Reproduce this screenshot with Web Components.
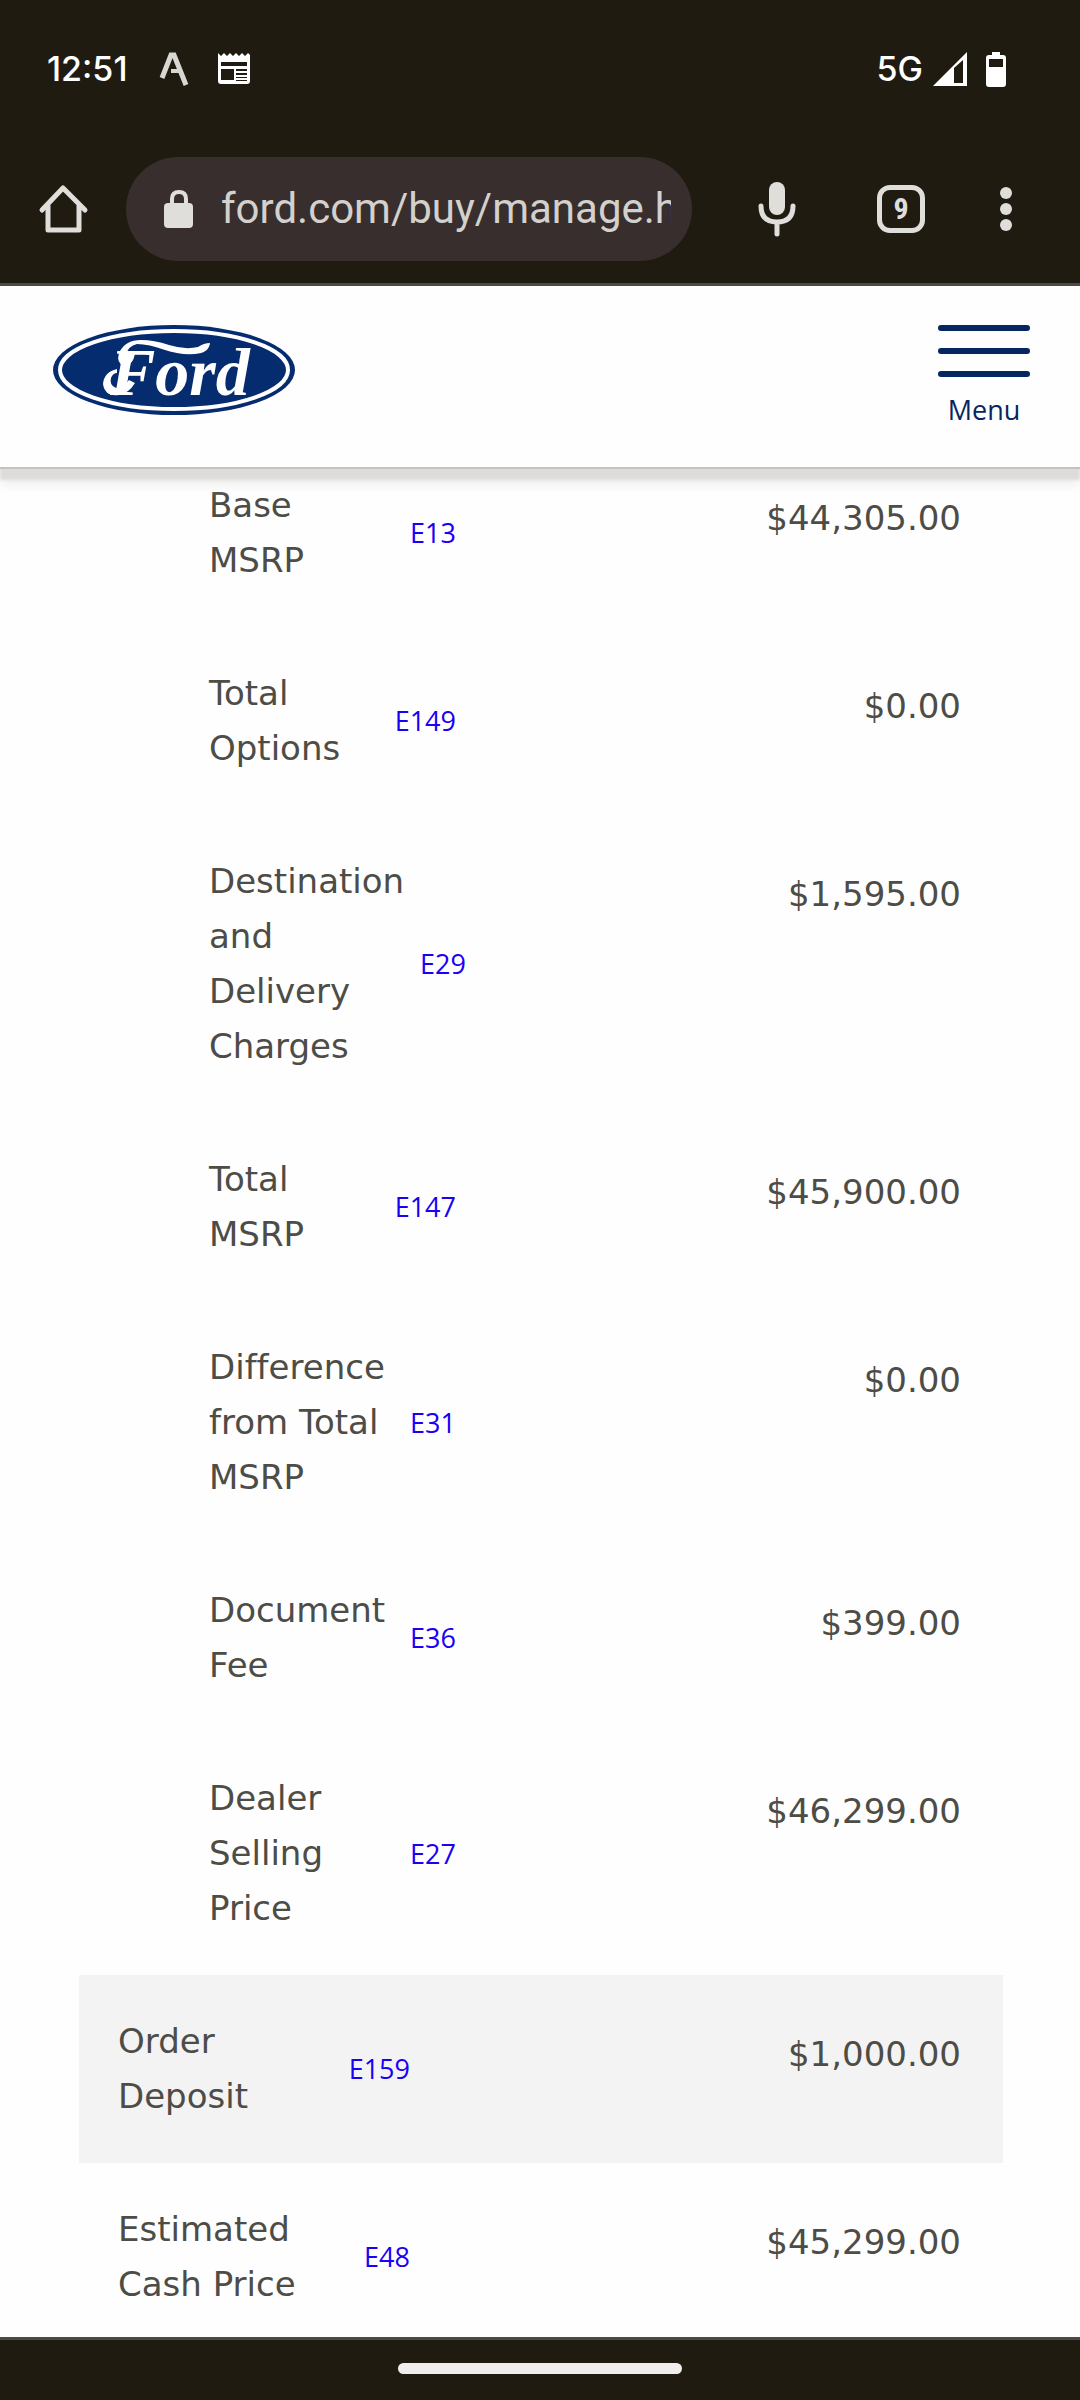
<!DOCTYPE html>
<html lang="en">
<head>
<meta charset="utf-8">
<meta name="viewport" content="width=device-width, initial-scale=1">
<title>Manage your order</title>
<style>
    body {
        margin: 0;
        height: 100vh;
        display: flex;
        flex-direction: column;
        overflow: hidden;
        background: #fefefe;
        color: #4d4c46;
        font-family: "DejaVu Sans", sans-serif;
    }

    main {
        flex: 1;
        min-height: 0;
        overflow: hidden;
    }
</style>
</head>
<body>
<status-bar>12:51<span slot="network">5G</span></status-bar>
<browser-toolbar url="ford.com/buy/manage.h" tabs="9"></browser-toolbar>
<site-header>Menu</site-header>
<main>
    <price-table></price-table>
</main>
<gesture-bar></gesture-bar>

<script>
class StatusBar extends HTMLElement {
    constructor() {
        super();
        this.attachShadow({ mode: 'open' });
    }

    connectedCallback() {
        this.shadowRoot.innerHTML = `
            <style>
                :host {
                    display: flex;
                    justify-content: space-between;
                    align-items: center;
                    height: 138px;
                    padding: 0 74px 0 47px;
                    background: #1f1b11;
                    color: #fff;
                    font: 500 34px/40px Inter, sans-serif;
                }
                .side { display: flex; align-items: center; }
                .left { gap: 28px; }
                .right { gap: 10px; }
                .battery { margin-left: 9px; }
                svg { display: block; }
            </style>
            <div class="side left">
                <span><slot></slot></span>
                <svg width="33" height="34" viewBox="0 0 33 34" fill="none" stroke="#d9d7d3" stroke-width="5">
                    <path d="M6 26 L15 3 H18 L30 33"/>
                    <path d="M15 19 H24" stroke-width="4"/>
                </svg>
                <svg width="34" height="32" viewBox="0 0 34 32">
                    <path fill="#fff" fill-rule="evenodd" d="M1 0 L4 3 L7 0 L10 3 L13 0 L16 3 L19 0 L22 3 L25 0 L28 3 L31 0 L33 2 V28 Q33 31 30 31 H4 Q1 31 1 28 Z
                        M4 9 V13 H30 V9 Z M4 16 V27 H17 V16 Z M19 16 V18 H30 V16 Z M19 20 V22 H30 V20 Z M19 24 V25 H30 V24 Z M19 27 V28 H30 V27 Z"/>
                </svg>
            </div>
            <div class="side right">
                <slot name="network"></slot>
                <svg width="34" height="34" viewBox="0 0 34 34">
                    <path fill="#fff" fill-rule="evenodd" d="M0 34 L34 0 V34 Z M21 16 V31 H30 V8 Z"/>
                </svg>
                <svg class="battery" width="20" height="35" viewBox="0 0 20 35">
                    <path fill="#fff" fill-rule="evenodd" d="M6 0 H14 V3 H17 Q20 3 20 6 V32 Q20 35 17 35 H3 Q0 35 0 32 V6 Q0 3 3 3 H6 Z M3 7 V15 H17 V7 Z"/>
                </svg>
            </div>
        `;
    }
}

class BrowserToolbar extends HTMLElement {
    constructor() {
        super();
        this.attachShadow({ mode: 'open' });
    }

    connectedCallback() {
        this.shadowRoot.innerHTML = `
            <style>
                :host {
                    display: flex;
                    align-items: center;
                    padding: 19px 68px 22px 38px;
                    border-bottom: 3px solid #4b4a44;
                    background: #1f1b11;
                    color: #dfdedb;
                }
                button {
                    display: block;
                    margin: 0;
                    padding: 0;
                    border: 0;
                    background: none;
                    color: inherit;
                }
                svg { display: block; }
                .omnibox {
                    flex: 1;
                    min-width: 0;
                    display: flex;
                    align-items: center;
                    gap: 27px;
                    height: 104px;
                    box-sizing: border-box;
                    margin: 0 66px 0 37px;
                    padding: 0 21px 0 38px;
                    border-radius: 52px;
                    background: #382e2d;
                }
                input {
                    flex: 1;
                    min-width: 0;
                    height: 60px;
                    margin: 0;
                    padding: 0;
                    border: 0;
                    outline: 0;
                    background: none;
                    color: #d2d1cd;
                    font: 42px/60px Roboto, sans-serif;
                }
                .actions { display: flex; align-items: center; }
                .tabs {
                    width: 48px;
                    height: 48px;
                    box-sizing: border-box;
                    margin: 0 75px 0 81px;
                    border: 5px solid #dfdedb;
                    border-radius: 13px;
                    font: 700 30px/36px "Roboto Condensed", Roboto, sans-serif;
                    text-align: center;
                }
            </style>
            <button type="button" aria-label="Home">
                <svg width="51" height="52" viewBox="0 0 51 52" fill="none" stroke="#dfdedb" stroke-width="5" stroke-linejoin="round" stroke-linecap="round">
                    <path d="M4 27 L25 5 L47 27"/>
                    <path d="M10 23 V47 H41 V23"/>
                </svg>
            </button>
            <div class="omnibox">
                <svg width="30" height="40" viewBox="0 0 30 40">
                    <rect x="0" y="14" width="29" height="25" rx="4" fill="#dfdedb"/>
                    <path d="M8 16 V10 Q8 3 15 3 Q22 3 22 10 V16" fill="none" stroke="#dfdedb" stroke-width="4"/>
                </svg>
                <input type="text" aria-label="Address" value="${this.getAttribute('url')}">
            </div>
            <div class="actions">
                <button type="button" aria-label="Voice search">
                    <svg width="38" height="56" viewBox="0 0 38 56">
                        <rect x="11" y="1" width="16" height="33" rx="8" fill="#dfdedb"/>
                        <path d="M3 25 Q3 41 19 41 Q35 41 35 25 M19 41 V53" fill="none" stroke="#dfdedb" stroke-width="5" stroke-linecap="round"/>
                    </svg>
                </button>
                <button type="button" class="tabs" aria-label="Open tabs">${this.getAttribute('tabs')}</button>
                <button type="button" aria-label="More">
                    <svg width="12" height="46" viewBox="0 0 12 46" fill="#dfdedb">
                        <circle cx="6" cy="7" r="6"/>
                        <circle cx="6" cy="23" r="6"/>
                        <circle cx="6" cy="39" r="6"/>
                    </svg>
                </button>
            </div>
        `;
    }
}

class SiteHeader extends HTMLElement {
    constructor() {
        super();
        this.attachShadow({ mode: 'open' });
    }

    connectedCallback() {
        this.shadowRoot.innerHTML = `
            <style>
                :host {
                    display: flex;
                    justify-content: space-between;
                    align-items: flex-start;
                    position: relative;
                    z-index: 1;
                    padding: 39px 50px 41px 53px;
                    background: #fefefe;
                    box-shadow: 0 2px 0 #c4c3c0, 0 13px 3px #dddcda, 0 18px 10px #efefee;
                }
                svg { display: block; }
                button {
                    display: flex;
                    flex-direction: column;
                    align-items: center;
                    gap: 17px;
                    margin: 0;
                    padding: 0;
                    border: 0;
                    background: none;
                    color: #06265f;
                    font: 27px/32px "Open Sans", sans-serif;
                }
                i {
                    width: 92px;
                    height: 6px;
                    border-radius: 3px;
                    background: #06265f;
                }
            </style>
            <a href="#" aria-label="Home page">
                <svg width="243" height="91" viewBox="0 0 243 91">
                    <ellipse cx="121" cy="45" rx="121" ry="45" fill="#062c70"/>
                    <ellipse cx="121" cy="45" rx="114" ry="39" fill="none" stroke="#fff" stroke-width="4"/>
                    <text x="57" y="70" fill="#fff" font-family="Liberation Serif, serif" font-size="68" font-style="italic" font-weight="700">Ford</text>
                    <g fill="#fff">
                        <path d="M82 27 Q81 40 71 41 Q63 38 66 28 Q72 15 88 15 Q101 15 116 20 Q132 25 145 22 Q151 18 157 18 Q156 28 142 29 Q126 30 112 25 Q96 19 84 19 Q75 21 73 30 Q74 35 78 31 Z"/>
                        <path d="M64 44 Q51 47 50 59 Q52 72 66 70 Q76 68 82 58 L76 55 Q70 63 63 63 Q56 60 58 53 Q60 48 64 48 Z"/>
                    </g>
                </svg>
            </a>
            <button type="button">
                <i></i><i></i><i></i>
                <span><slot></slot></span>
            </button>
        `;
    }
}

// label on the left, code link on the right, both centred on the same line
class PriceItem extends HTMLElement {
    constructor() {
        super();
        this.attachShadow({ mode: 'open' });
    }

    connectedCallback() {
        this.shadowRoot.innerHTML = `
            <style>
                :host {
                    display: flex;
                    justify-content: space-between;
                    align-items: center;
                    gap: 16px;
                }
                ::slotted(a) {
                    color: #1a00f5;
                    font: 27px/32px "Open Sans", sans-serif;
                    text-decoration: none;
                }
            </style>
            <span><slot></slot></span>
            <slot name="code"></slot>
        `;
    }
}

class PriceTable extends HTMLElement {
    constructor() {
        super();
        this.attachShadow({ mode: 'open' });
        this.rows = [
            { label: 'Base MSRP', code: 'E13', price: '$44,305.00', type: 'sub' },
            { label: 'Total Options', code: 'E149', price: '$0.00', type: 'sub' },
            { label: 'Destination and Delivery Charges', code: 'E29', price: '$1,595.00', type: 'sub' },
            { label: 'Total MSRP', code: 'E147', price: '$45,900.00', type: 'sub' },
            { label: 'Difference from Total MSRP', code: 'E31', price: '$0.00', type: 'sub' },
            { label: 'Document Fee', code: 'E36', price: '$399.00', type: 'sub' },
            { label: 'Dealer Selling Price', code: 'E27', price: '$46,299.00', type: 'sub' },
            { label: 'Order Deposit', code: 'E159', price: '$1,000.00', type: 'shaded' },
            { label: 'Estimated Cash Price', code: 'E48', price: '$45,299.00', type: '' }
        ];
    }

    connectedCallback() {
        this.render();
    }

    render() {
        const body = this.rows.map((row) => `
            <tr class="${row.type}">
                <th scope="row">
                    <price-item>${row.label}<a slot="code" href="#${row.code}">${row.code}</a></price-item>
                </th>
                <td>${row.price}</td>
            </tr>
        `).join('');

        this.shadowRoot.innerHTML = `
            <style>
                :host {
                    display: block;
                    padding: 0 77px 0 79px;
                }
                table {
                    width: 100%;
                    table-layout: fixed;
                    border-collapse: collapse;
                    font-size: 34px;
                    font-variant-ligatures: none;
                    line-height: 55px;
                }
                th, td {
                    vertical-align: top;
                    font-weight: 400;
                }
                th {
                    padding: 39px 131px 39px 39px;
                    text-align: left;
                }
                td {
                    padding: 52px 42px 26px 0;
                    text-align: right;
                }
                .sub th {
                    padding-left: 130px;
                    padding-right: 85px;
                }
                /* top of the list is scrolled under the site header */
                tr:first-child th { padding-top: 11px; }
                tr:first-child td { padding-top: 24px; }
                .shaded { background: #f3f3f3; }
            </style>
            <table>
                <tbody>${body}</tbody>
            </table>
        `;
    }
}

class GestureBar extends HTMLElement {
    constructor() {
        super();
        this.attachShadow({ mode: 'open' });
    }

    connectedCallback() {
        this.shadowRoot.innerHTML = `
            <style>
                :host {
                    display: flex;
                    justify-content: center;
                    padding: 23px 0 26px;
                    border-top: 3px solid #4b4a44;
                    background: #1f1b11;
                }
                div {
                    width: 284px;
                    height: 11px;
                    border-radius: 6px;
                    background: #efeeed;
                }
            </style>
            <div></div>
        `;
    }
}

customElements.define('status-bar', StatusBar);
customElements.define('browser-toolbar', BrowserToolbar);
customElements.define('site-header', SiteHeader);
customElements.define('price-item', PriceItem);
customElements.define('price-table', PriceTable);
customElements.define('gesture-bar', GestureBar);
</script>
</body>
</html>
